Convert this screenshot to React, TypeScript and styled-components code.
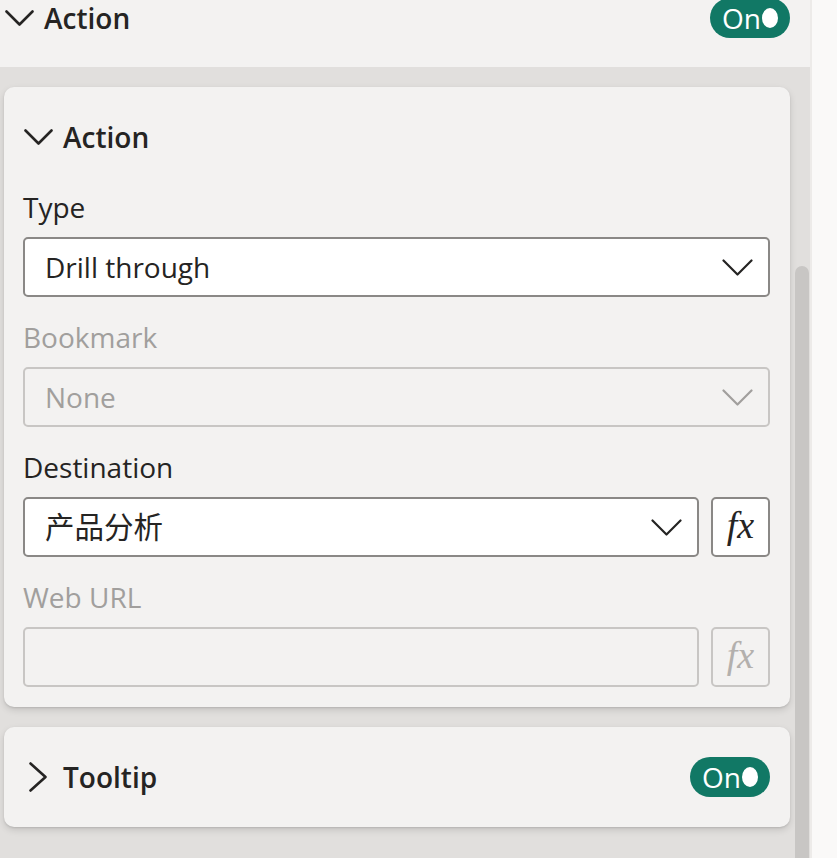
import React from "react";
import styled, { createGlobalStyle } from "styled-components";

const GlobalStyle = createGlobalStyle`
  html, body { margin: 0; padding: 0; height: 100%; overflow: hidden; }
  body { font-family: "Open Sans", "Noto Sans CJK SC", sans-serif; color: #252423; background: #faf9f8; }
  #root { height: 100%; }
`;

const Page = styled.div`
  display: flex;
  height: 858px;
  width: 837px;
  overflow: hidden;
`;

const Pane = styled.div`
  width: 810px;
  display: flex;
  flex-direction: column;
  background: #e1dfdd;
`;

const RightStrip = styled.div`
  flex: 1;
  background: #faf9f8;
  border-left: 2px solid #edebe9;
`;

const TopSection = styled.div`
  height: 67px;
  flex: none;
  background: #f3f2f1;
  padding: 0 20px 0 4px;
  box-sizing: border-box;
`;

const HeaderRow = styled.div<{ $height?: number }>`
  display: flex;
  align-items: center;
  gap: 10px;
  height: ${(p) => p.$height ?? 60}px;
`;

const IconBox = styled.span`
  width: 30px;
  display: flex;
  justify-content: center;
  align-items: center;
  flex: none;
`;

const Title = styled.span`
  font-size: 28px;
  font-weight: 600;
  line-height: 40px;
  flex: 1;
`;

const Toggle = styled.div`
  width: 80px;
  height: 40px;
  border-radius: 20px;
  background: #117865;
  display: flex;
  align-items: center;
  box-sizing: border-box;
  padding: 0 12px 0 12px;
  flex: none;
`;

const ToggleText = styled.span`
  color: #fff;
  font-size: 28px;
  line-height: 40px;
  flex: 1;
`;

const Knob = styled.span`
  width: 16px;
  height: 20px;
  border-radius: 50%;
  background: #fff;
`;

const ScrollArea = styled.div`
  flex: 1;
  display: flex;
  min-height: 0;
`;

const Content = styled.div`
  flex: 1;
  padding: 20px 0 0 4px;
  display: flex;
  flex-direction: column;
  gap: 20px;
`;

const ScrollTrack = styled.div`
  width: 20px;
  padding-top: 199px;
  padding-left: 5px;
  padding-right: 1px;
  box-sizing: border-box;
  display: flex;
  flex-direction: column;
`;

const Thumb = styled.div`
  flex: 1;
  background: #c8c6c4;
  border-radius: 7px 7px 0 0;
`;

const Card = styled.div`
  background: #f3f2f1;
  border-radius: 10px;
  box-shadow: 0 3px 7px rgba(0, 0, 0, 0.13), 0 1px 2px rgba(0, 0, 0, 0.1);
  padding: 20px 20px 20px 19px;
  display: flex;
  flex-direction: column;
  flex: none;
`;

const Fields = styled.div`
  margin-top: 20px;
  display: flex;
  flex-direction: column;
  gap: 20px;
`;

const Field = styled.div`
  display: flex;
  flex-direction: column;
  gap: 10px;
`;

const Label = styled.div<{ $disabled?: boolean }>`
  font-size: 28px;
  line-height: 40px;
  height: 40px;
  color: ${(p) => (p.$disabled ? "#a19f9d" : "#252423")};
`;

const InputRow = styled.div`
  display: flex;
  gap: 12px;
`;

const Box = styled.div<{ $disabled?: boolean }>`
  flex: 1 0 auto;
  height: 60px;
  box-sizing: border-box;
  border: 2px solid ${(p) => (p.$disabled ? "#c8c6c4" : "#8a8886")};
  background: ${(p) => (p.$disabled ? "#f3f2f1" : "#ffffff")};
  border-radius: 5px;
  display: flex;
  align-items: center;
  padding: 0 15px 0 20px;
  color: ${(p) => (p.$disabled ? "#a19f9d" : "#252423")};
  font-size: 28px;
`;

const BoxText = styled.span<{ $cjk?: boolean }>`
  flex: 1;
  line-height: 40px;
  font-size: ${(p) => (p.$cjk ? 29.5 : 28)}px;
  font-family: "Open Sans", "Noto Sans CJK SC", sans-serif;
`;

const FxButton = styled.div<{ $disabled?: boolean }>`
  width: 59px;
  height: 60px;
  box-sizing: border-box;
  border: 2px solid ${(p) => (p.$disabled ? "#c8c6c4" : "#8a8886")};
  background: ${(p) => (p.$disabled ? "#f3f2f1" : "#ffffff")};
  border-radius: 5px;
  display: flex;
  align-items: center;
  justify-content: center;
  font-family: "Liberation Serif", serif;
  font-style: italic;
  font-size: 38px;
  line-height: 1;
  color: ${(p) => (p.$disabled ? "#b3b0ad" : "#252423")};
  flex: none;
  padding-bottom: 4px;
`;

const ChevronDown = ({ w = 29, h = 16, color = "#252423", sw = 2.6 }: { w?: number; h?: number; color?: string; sw?: number }) => (
  <svg width={w} height={h} viewBox={`0 0 ${w} ${h}`} fill="none">
    <polyline points={`1.5,1.5 ${w / 2},${h - 1.5} ${w - 1.5},1.5`} stroke={color} strokeWidth={sw} strokeLinecap="round" strokeLinejoin="round" />
  </svg>
);

const ChevronRight = () => (
  <svg width={18} height={30} viewBox="0 0 18 30" fill="none">
    <polyline points="1.5,1.5 16.5,15 1.5,28.5" stroke="#252423" strokeWidth={2.6} strokeLinecap="round" strokeLinejoin="round" />
  </svg>
);

const Select = ({ value, disabled, cjk }: { value: string; disabled?: boolean; cjk?: boolean }) => (
  <Box $disabled={disabled}>
    <BoxText $cjk={cjk}>{value}</BoxText>
    <ChevronDown w={31} h={17} sw={2.2} color={disabled ? "#a19f9d" : "#252423"} />
  </Box>
);

export default function App() {
  return (
    <>
      <GlobalStyle />
      <Page>
        <Pane>
          <TopSection>
            <HeaderRow $height={36}>
              <IconBox>
                <ChevronDown />
              </IconBox>
              <Title>Action</Title>
              <Toggle>
                <ToggleText>On</ToggleText>
                <Knob />
              </Toggle>
            </HeaderRow>
          </TopSection>
          <ScrollArea>
            <Content>
              <Card>
                <HeaderRow>
                  <IconBox>
                    <ChevronDown />
                  </IconBox>
                  <Title>Action</Title>
                </HeaderRow>
                <Fields>
                  <Field>
                    <Label>Type</Label>
                    <Select value="Drill through" />
                  </Field>
                  <Field>
                    <Label $disabled>Bookmark</Label>
                    <Select value="None" disabled />
                  </Field>
                  <Field>
                    <Label>Destination</Label>
                    <InputRow>
                      <Select value="产品分析" cjk />
                      <FxButton>fx</FxButton>
                    </InputRow>
                  </Field>
                  <Field>
                    <Label $disabled>Web URL</Label>
                    <InputRow>
                      <Box $disabled />
                      <FxButton $disabled>fx</FxButton>
                    </InputRow>
                  </Field>
                </Fields>
              </Card>
              <Card>
                <HeaderRow>
                  <IconBox>
                    <ChevronRight />
                  </IconBox>
                  <Title>Tooltip</Title>
                  <Toggle>
                    <ToggleText>On</ToggleText>
                    <Knob />
                  </Toggle>
                </HeaderRow>
              </Card>
            </Content>
            <ScrollTrack>
              <Thumb />
            </ScrollTrack>
          </ScrollArea>
        </Pane>
        <RightStrip />
      </Page>
    </>
  );
}
